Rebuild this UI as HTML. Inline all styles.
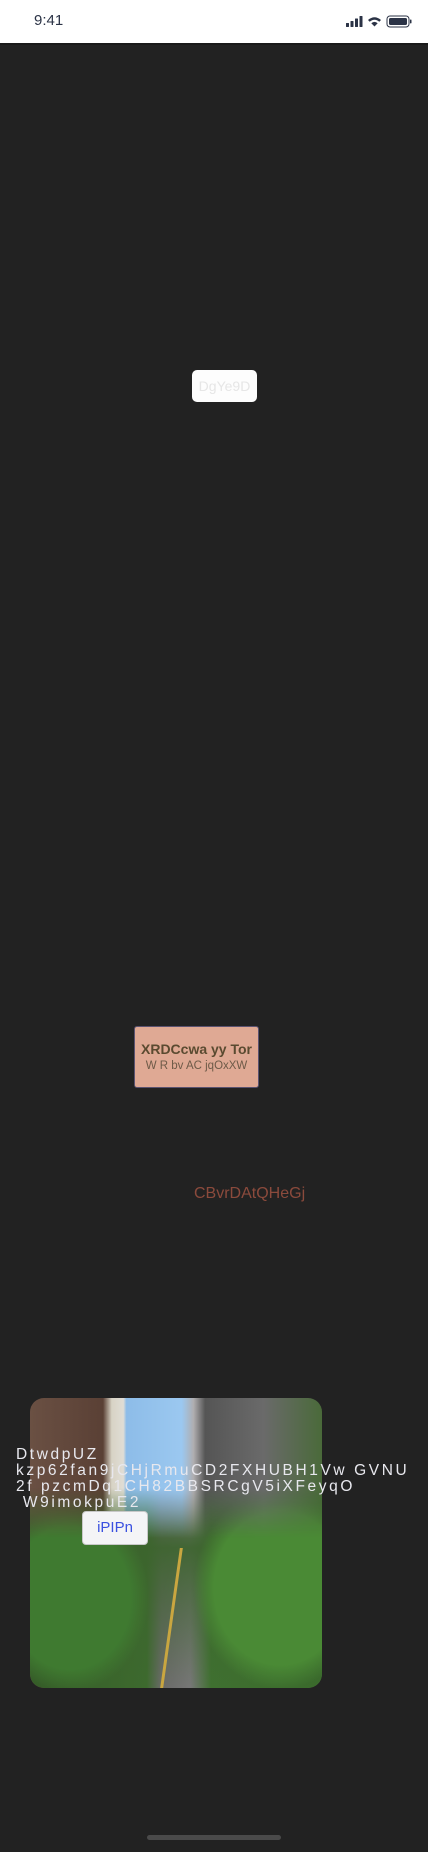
<!DOCTYPE html>
<html><head><meta charset="utf-8"><style>
*{margin:0;padding:0;box-sizing:border-box}
html,body{width:428px;height:1852px;background:#222222;overflow:hidden;font-family:"Liberation Sans",sans-serif;position:relative}
.status{position:absolute;left:0;top:0;width:428px;height:43px;background:#fff}
.time{position:absolute;left:34px;top:12px;font-size:15px;color:#2b3346}
.dark{position:absolute;top:43px;left:0;width:428px;height:2px;background:#1a1a1a}
.btn1{position:absolute;left:192px;top:370px;width:65px;height:32px;background:#fdfdfd;border-radius:5px;color:#e6e6e6;font-size:14px;text-align:center;line-height:32px}
.salmon{position:absolute;left:134px;top:1026px;width:125px;height:62px;background:#dfa994;border:1px solid #5a5270;border-radius:3px;text-align:center}
.salmon .a{font-size:14px;font-weight:bold;color:#5a4a30;margin-top:14px}
.salmon .b{font-size:11.5px;color:#6e5a48;margin-top:3px}
.red{position:absolute;left:194px;top:1185px;font-size:16px;color:#8b4a3c}
.card{position:absolute;left:30px;top:1398px;width:292px;height:290px;border-radius:14px;overflow:hidden;
background:linear-gradient(90deg,#6a5043 0,#5a4035 25%,#d8d3c5 28%,#e0ddd5 32%,#8dbce8 33%,#9bc8f0 52%,#b0aeb0 56%,#555 60%,#6a6a6a 80%,#4a6a3a 100%);}
.trees{position:absolute;left:0;top:90px;width:292px;height:200px;
background:radial-gradient(ellipse 110px 130px at 40px 110px,#3f7a30 55%,transparent 72%),
radial-gradient(ellipse 120px 140px at 250px 100px,#4a8a35 55%,transparent 72%),
linear-gradient(180deg,rgba(60,100,45,0) 0,rgba(60,100,45,.9) 30%,transparent 100%),
linear-gradient(90deg,#355c28 0,#3d6a2e 40%,#6a6a68 45%,#777 55%,#3f7030 62%,#3a6a2c 100%);
-webkit-mask:linear-gradient(180deg,transparent 0,#000 25%);}
.road{position:absolute;left:140px;top:150px;width:3px;height:140px;background:#c9a640;transform:skewX(-8deg)}
.txt{position:absolute;left:16px;top:1447px;font-size:15.5px;line-height:16px;letter-spacing:2.6px;color:#e8e8ee;white-space:pre}
.btn2{position:absolute;left:82px;top:1511px;width:66px;height:34px;background:#f4f4f6;border:1px solid #c8c8c8;border-radius:4px;color:#3a50e0;font-size:15px;text-align:center;line-height:32px}
.home{position:absolute;left:147px;top:1835px;width:134px;height:5px;border-radius:3px;background:#4a4a4a}
</style></head><body>
<div class="status"><div class="time">9:41</div>
<svg style="position:absolute;left:346px;top:15px" width="70" height="14" viewBox="0 0 70 14">
<rect x="0" y="8" width="3" height="4" rx=".5" fill="#2b3346"/><rect x="4.5" y="6" width="3" height="6" rx=".5" fill="#2b3346"/><rect x="9" y="3.5" width="3" height="8.5" rx=".5" fill="#2b3346"/><rect x="13.5" y="1" width="3" height="11" rx=".5" fill="#2b3346"/>
<path d="M22 5 Q28.5 -0.5 35 5 L33.3 6.7 Q28.5 2.7 23.7 6.7Z M25.3 8.3 Q28.5 5.5 31.7 8.3 L28.5 11.5Z" fill="#2b3346"/>
<rect x="41" y="1" width="22" height="11" rx="3" fill="none" stroke="#2b3346" stroke-width="1"/><rect x="43" y="3" width="18" height="7" rx="1.5" fill="#2b3346"/><rect x="64" y="4.5" width="1.5" height="4" rx=".7" fill="#2b3346"/></svg>
</div>
<div class="dark"></div>
<div class="btn1">DgYe9D</div>
<div class="salmon"><div class="a">XRDCcwa yy Tor</div><div class="b">W R bv AC jqOxXW</div></div>
<div class="red">CBvrDAtQHeGj</div>
<div class="card"><div class="trees"></div><div class="road"></div></div>
<div class="txt">DtwdpUZ
kzp62fan9jCHjRmuCD2FXHUBH1Vw GVNU
2f pzcmDq1CH82BBSRCgV5iXFeyqO
 W9imokpuE2</div>
<div class="btn2">iPIPn</div>
<div class="home"></div>
</body></html>
